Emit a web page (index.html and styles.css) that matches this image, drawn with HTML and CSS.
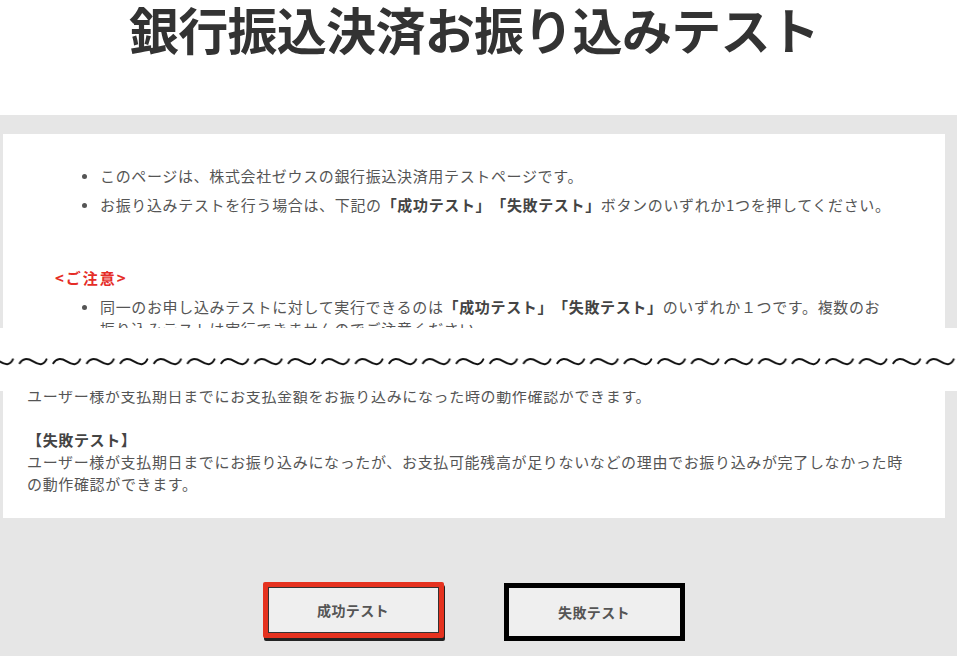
FILE: index.html
```html
<!DOCTYPE html>
<html lang="ja">
<head>
<meta charset="utf-8">
<title>銀行振込決済お振り込みテスト</title>
<link rel="stylesheet" href="styles.css">
</head>
<body>
<header class="masthead">
  <h1 class="title">銀行振込決済お振り込みテスト</h1>
</header>

<section class="panel panel-top">
  <div class="card card-head">
    <ul class="notes">
      <li>このページは、株式会社ゼウスの銀行振込決済用テストページです。</li>
      <li>お振り込みテストを行う場合は、下記の<b>「成功テスト」「失敗テスト」</b>ボタンのいずれか1つを押してください。</li>
    </ul>
    <p class="caution">&lt;ご注意&gt;</p>
    <ul class="notes">
      <li>同一のお申し込みテストに対して実行できるのは<b>「成功テスト」「失敗テスト」</b>のいずれか１つです。複数のお<br>振り込みテストは実行できませんのでご注意ください。</li>
    </ul>
  </div>
</section>

<div class="cut">
  <svg class="wave" width="957" height="14" viewBox="0 0 957 14" aria-hidden="true">
    <defs>
      <pattern id="tilde" patternUnits="userSpaceOnUse" x="17.5" y="0" width="33.6" height="14">
        <path d="M2.2 8.2 C5 3.6 9.4 2.6 15.6 6.4 S26 10.6 29 4.4" fill="none" stroke="#111" stroke-width="2" stroke-linecap="round"/>
      </pattern>
    </defs>
    <rect x="0" y="0" width="957" height="14" fill="url(#tilde)"/>
  </svg>
</div>

<section class="panel panel-bottom">
  <div class="card card-tail">
    <p class="desc">ユーザー様が支払期日までにお支払金額をお振り込みになった時の動作確認ができます。<br><br><b>【失敗テスト】</b><br>ユーザー様が支払期日までにお振り込みになったが、お支払可能残高が足りないなどの理由でお振り込みが完了しなかった時<br>の動作確認ができます。</p>
  </div>
  <div class="actions">
    <button class="btn btn-ok" type="button">成功テスト</button>
    <button class="btn btn-ng" type="button">失敗テスト</button>
  </div>
</section>
</body>
</html>
```

FILE: styles.css
```css
* {
  box-sizing: border-box;
}

html,
body {
  margin: 0;
  padding: 0;
  background: #fff;
}

body {
  width: 957px;
  height: 656px;
  overflow: hidden;
  font-family: "Noto Sans CJK JP", "Noto Sans", sans-serif;
  font-size: 15px;
  line-height: 22px;
  letter-spacing: 0.65px;
  color: #555;
  text-spacing-trim: space-all;
}

/* page heading */
.masthead {
  height: 115px;
  padding: 0 12px 0 3px;
}

.title {
  margin: 0;
  text-align: center;
  font-size: 50px;
  line-height: 56px;
  font-weight: 700;
  letter-spacing: -0.7px;
  color: #333;
}

/* grey band holding the white cards */
.panel {
  background: #e6e6e6;
  padding: 0 12px 0 3px;
  overflow: hidden;
}

.panel-top {
  height: 213px;
  padding-top: 19px;
}

.panel-bottom {
  height: 265px;
}

.card {
  background: #fff;
}

.card-head {
  padding: 31px 20px 0 0;
}

.notes {
  list-style: none;
  margin: 0;
  padding: 0 0 0 97px;
}

.notes li {
  position: relative;
  margin-bottom: 7px;
}

.notes li::before {
  content: "";
  position: absolute;
  left: -18px;
  top: 9px;
  width: 5px;
  height: 5px;
  border-radius: 50%;
  background: #555;
}

.notes b,
.desc b {
  color: #444;
  font-weight: 700;
}

.caution {
  margin: 51px 0 7px;
  padding-left: 52px;
  color: #e52d27;
  font-weight: 700;
  letter-spacing: 2px;
}

/* torn-off separator between the two parts */
.cut {
  height: 63px;
  background: #fff;
  padding-top: 27px;
}

.wave {
  display: block;
}

.card-tail {
  margin-top: -6px;
  padding: 0 20px 23px 24px;
}

.desc {
  margin: 0;
}

/* buttons */
.actions {
  display: flex;
  justify-content: center;
  align-items: flex-start;
  gap: 60px;
  margin-top: 65px;
  padding-right: 1px;
}

.btn {
  width: 181px;
  height: 58px;
  padding: 0;
  margin: 0;
  background: #efefef;
  border: 5px solid #000;
  font-family: "Noto Sans CJK JP", sans-serif;
  font-size: 14px;
  font-weight: 700;
  letter-spacing: 0.4px;
  color: #555;
  cursor: pointer;
}

.btn-ok {
  height: 56px;
  margin-top: -1px;
  border-color: #e5321f;
  border-radius: 2px;
  box-shadow: inset 0 0 0 1px #333, 1px 3px 0 #222;
}
```
